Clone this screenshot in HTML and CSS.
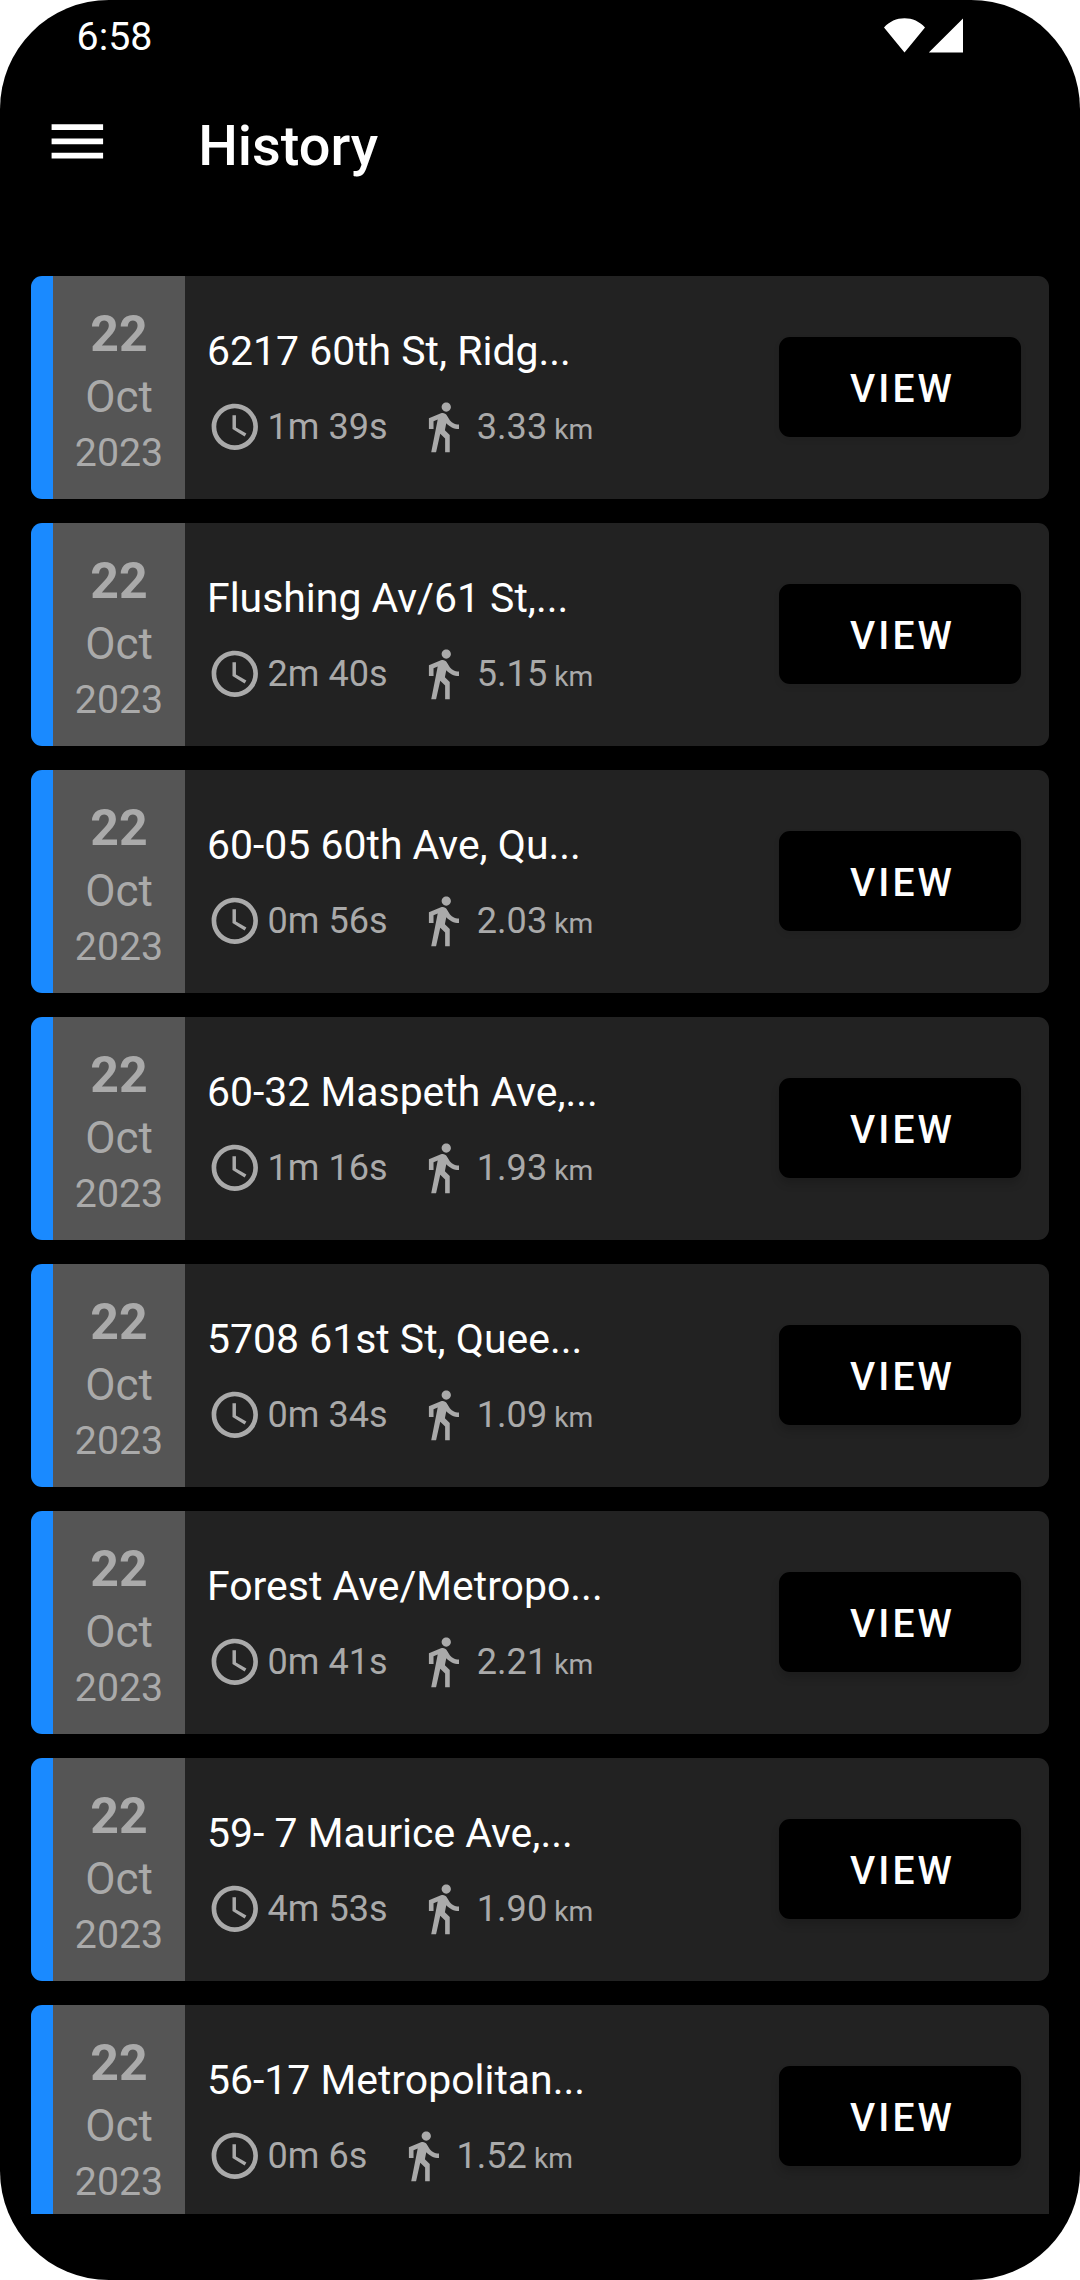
FILE: index.html
```html
<!DOCTYPE html>
<html lang="en">
<head>
<meta charset="utf-8">
<title>History</title>
<link rel="stylesheet" href="styles.css">
</head>
<body>
<svg class="sprite" aria-hidden="true">
  <symbol id="clock" viewBox="0 0 24 24"><path d="M11.99 2C6.47 2 2 6.48 2 12s4.47 10 9.99 10C17.52 22 22 17.52 22 12S17.52 2 11.99 2zM12 20c-4.42 0-8-3.58-8-8s3.58-8 8-8 8 3.58 8 8-3.58 8-8 8zm.5-13H11v6l5.25 3.15.75-1.23-4.5-2.67z"/></symbol>
  <symbol id="walk" viewBox="0 0 24 24"><path d="M13.5 5.5c1.1 0 2-.9 2-2s-.9-2-2-2-2 .9-2 2 .9 2 2 2zM9.8 8.9L7 23h2.1l1.8-8 2.1 2v6h2v-7.5l-2.1-2 .6-3C14.8 12 16.8 13 19 13v-2c-1.9 0-3.5-1-4.3-2.4l-1-1.6c-.4-.6-1-1-1.7-1-.3 0-.5.1-.8.1L6 8.3V13h2V9.6l1.8-.7"/></symbol>
</svg>
<div class="phone">
  <header class="status">
    <span class="time">6:58</span>
    <svg class="signals" viewBox="0 0 80 36"><path d="M20.5 34.5 0 9.5C5.500 3.500 12.500.3 20.500.3S35.500 3.500 41 9.500ZM79 .5V34.500H44.800Z"/></svg>
  </header>
  <nav class="toolbar">
    <svg class="menu" viewBox="0 0 24 24"><path d="M3 18h18v-2H3v2zm0-5h18v-2H3v2zm0-7v2h18V6H3z"/></svg>
    <h1>History</h1>
  </nav>
  <main class="list">
    <article class="card">
      <div class="date"><b>22</b><span class="month">Oct</span><span class="year">2023</span></div>
      <div class="info">
        <div class="address">6217 60th St, Ridg...</div>
        <div class="meta"><svg><use href="#clock"/></svg><span class="duration">1m 39s</span><svg><use href="#walk"/></svg><span class="distance">3.33<small> km</small></span></div>
      </div>
      <button class="view">VIEW</button>
    </article>
    <article class="card">
      <div class="date"><b>22</b><span class="month">Oct</span><span class="year">2023</span></div>
      <div class="info">
        <div class="address">Flushing Av/61 St,...</div>
        <div class="meta"><svg><use href="#clock"/></svg><span class="duration">2m 40s</span><svg><use href="#walk"/></svg><span class="distance">5.15<small> km</small></span></div>
      </div>
      <button class="view">VIEW</button>
    </article>
    <article class="card">
      <div class="date"><b>22</b><span class="month">Oct</span><span class="year">2023</span></div>
      <div class="info">
        <div class="address">60-05 60th Ave, Qu...</div>
        <div class="meta"><svg><use href="#clock"/></svg><span class="duration">0m 56s</span><svg><use href="#walk"/></svg><span class="distance">2.03<small> km</small></span></div>
      </div>
      <button class="view">VIEW</button>
    </article>
    <article class="card">
      <div class="date"><b>22</b><span class="month">Oct</span><span class="year">2023</span></div>
      <div class="info">
        <div class="address">60-32 Maspeth Ave,...</div>
        <div class="meta"><svg><use href="#clock"/></svg><span class="duration">1m 16s</span><svg><use href="#walk"/></svg><span class="distance">1.93<small> km</small></span></div>
      </div>
      <button class="view">VIEW</button>
    </article>
    <article class="card">
      <div class="date"><b>22</b><span class="month">Oct</span><span class="year">2023</span></div>
      <div class="info">
        <div class="address">5708 61st St, Quee...</div>
        <div class="meta"><svg><use href="#clock"/></svg><span class="duration">0m 34s</span><svg><use href="#walk"/></svg><span class="distance">1.09<small> km</small></span></div>
      </div>
      <button class="view">VIEW</button>
    </article>
    <article class="card">
      <div class="date"><b>22</b><span class="month">Oct</span><span class="year">2023</span></div>
      <div class="info">
        <div class="address">Forest Ave/Metropo...</div>
        <div class="meta"><svg><use href="#clock"/></svg><span class="duration">0m 41s</span><svg><use href="#walk"/></svg><span class="distance">2.21<small> km</small></span></div>
      </div>
      <button class="view">VIEW</button>
    </article>
    <article class="card">
      <div class="date"><b>22</b><span class="month">Oct</span><span class="year">2023</span></div>
      <div class="info">
        <div class="address">59- 7 Maurice Ave,...</div>
        <div class="meta"><svg><use href="#clock"/></svg><span class="duration">4m 53s</span><svg><use href="#walk"/></svg><span class="distance">1.90<small> km</small></span></div>
      </div>
      <button class="view">VIEW</button>
    </article>
    <article class="card">
      <div class="date"><b>22</b><span class="month">Oct</span><span class="year">2023</span></div>
      <div class="info">
        <div class="address">56-17 Metropolitan...</div>
        <div class="meta"><svg><use href="#clock"/></svg><span class="duration">0m 6s</span><svg><use href="#walk"/></svg><span class="distance">1.52<small> km</small></span></div>
      </div>
      <button class="view">VIEW</button>
    </article>
  </main>
</div>
</body>
</html>
```
FILE: styles.css
```css
* { box-sizing: border-box; }
body { margin: 0; background: #fff; font-family: Roboto, sans-serif; }
.sprite { display: none; }

.phone {
  display: flex;
  flex-direction: column;
  width: 1080px;
  height: 2280px;
  overflow: hidden;
  border-radius: 109px;
  background: #000;
  color: #fff;
}

.status {
  display: flex;
  justify-content: space-between;
  align-items: flex-start;
  height: 74px;
  padding: 14px 116px 0 76.600px;
}
.time { font-size: 39.300px; line-height: 47px; }
.signals { width: 80px; height: 36px; margin-top: 4px; fill: #fff; }

.toolbar {
  display: flex;
  height: 202px;
  padding: 33px 0 0 42.700px;
}
.menu { width: 68.700px; height: 68.700px; fill: #fff; }
.toolbar h1 {
  margin: 7px 0 0 86.800px;
  font-size: 55.900px;
  font-weight: 500;
  line-height: 64px;
}

.list {
  display: flex;
  flex-direction: column;
  gap: 24px;
  height: 1938px;
  padding: 0 31px;
  overflow: hidden;
}

.card {
  display: flex;
  flex: none;
  height: 223px;
  overflow: hidden;
  border-left: 22px solid #1a8aff;
  border-radius: 11px;
  background: #222;
}

.date {
  display: flex;
  flex-direction: column;
  align-items: center;
  width: 132px;
  padding-top: 29px;
  background: #555;
  color: #aaa;
}
.date b { font-size: 50px; font-weight: 700; line-height: 58px; }
.month { margin-top: 8px; font-size: 44px; line-height: 52px; }
.year { margin-top: 7px; font-size: 39.300px; line-height: 46px; }

.info { flex: 1; padding: 51px 0 0 22px; white-space: nowrap; }
.address { font-size: 40.950px; line-height: 48px; }
.meta {
  display: flex;
  align-items: center;
  margin-top: 24px;
  color: #aaa;
  font-size: 36.100px;
  line-height: 42px;
}
.meta svg { flex: none; width: 55.600px; height: 55.600px; fill: #aaa; }
.duration { margin: 0 27.600px 0 5px; }
.distance { margin-left: 6px; }
.distance small { font-size: 28.200px; line-height: 1; white-space: pre; }

.view {
  width: 242px;
  height: 100px;
  margin: 61px 28px 0 0;
  padding: 3px 0 0 5px;
  border: 0;
  border-radius: 11px;
  background: #000;
  color: #fff;
  font: 500 39px/46px Roboto, sans-serif;
  letter-spacing: 3.150px;
  box-shadow: 0 3px 6px rgba(0, 0, 0, .08);
}
.card:nth-child(n+4) .view { box-shadow: 0 6px 9px rgba(0, 0, 0, .16); }
```
